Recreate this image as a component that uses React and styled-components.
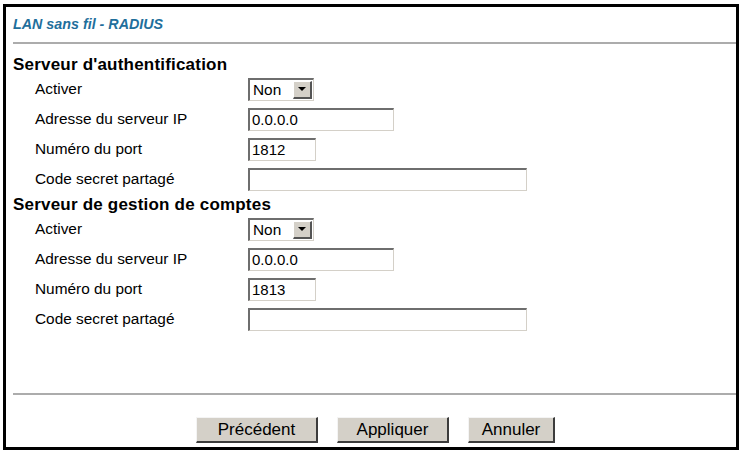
import React from "react";
import styled, { createGlobalStyle } from "styled-components";

const GlobalStyle = createGlobalStyle`
  html, body {
    margin: 0;
    padding: 0;
    background: #ffffff;
  }
  body {
    font-family: "Liberation Sans", Arial, sans-serif;
    color: #000000;
  }
`;

// cadre noir autour de la page
const Frame = styled.div`
  box-sizing: border-box;
  width: 736px;
  height: 446px;
  margin: 4px 0 0 3px;
  border: 3px solid #000000;
  padding: 7px 0 0 7px;
  display: flex;
  flex-direction: column;
`;

const Title = styled.div`
  font-size: 14.3px;
  line-height: 20px;
  font-weight: bold;
  font-style: italic;
  color: #1f6f9c;
`;

const Rule = styled.div`
  height: 2px;
  background: #acacac;
  margin-top: ${(p) => p.$top || 0}px;
`;

const SectionTitle = styled.div`
  font-size: 17px;
  line-height: 18px;
  font-weight: bold;
  letter-spacing: 0.2px;
  margin-top: ${(p) => p.$top || 0}px;
`;

const Row = styled.div`
  display: grid;
  grid-template-columns: 235px 1fr;
  align-items: center;
  height: 30px;
`;

const Label = styled.div`
  padding-left: 22px;
  font-size: 15.4px;
`;

const Field = styled.div`
  box-sizing: border-box;
  width: ${(p) => p.$width}px;
  height: 23px;
  background: #ffffff;
  border-top: 2px solid #6e6e6e;
  border-left: 2px solid #6e6e6e;
  border-bottom: 1px solid #d4d0c8;
  border-right: 1px solid #d4d0c8;
  padding-left: 2px;
  font-size: 15px;
  line-height: 20px;
`;

const Select = styled.div`
  box-sizing: border-box;
  width: 66px;
  height: 23px;
  display: flex;
  align-items: center;
  justify-content: space-between;
  background: #ffffff;
  border-top: 2px solid #6e6e6e;
  border-left: 2px solid #6e6e6e;
  border-bottom: 1px solid #d4d0c8;
  border-right: 1px solid #d4d0c8;
  padding: 0 1px 0 3px;
  font-size: 15.4px;
`;

// bouton de la liste déroulante avec son triangle
const Arrow = styled.span`
  box-sizing: border-box;
  width: 19px;
  height: 18px;
  display: flex;
  align-items: center;
  justify-content: center;
  background: #d4d0c8;
  border-top: 1px solid #ffffff;
  border-left: 1px solid #ffffff;
  border-bottom: 2px solid #555555;
  border-right: 2px solid #555555;

  &::after {
    content: "";
    border-left: 4px solid transparent;
    border-right: 4px solid transparent;
    border-top: 4px solid #000000;
  }
`;

const Footer = styled.div`
  margin-top: auto;
  border-top: 2px solid #acacac;
  padding: 22px 0 4px 2px;
  display: flex;
  justify-content: center;
  gap: 19px;
`;

const Button = styled.button`
  box-sizing: border-box;
  width: ${(p) => p.$width}px;
  height: 26px;
  padding: 0;
  background: #d4d0c8;
  border-top: 1px solid #f4f4f4;
  border-left: 1px solid #f4f4f4;
  border-bottom: 2px solid #3c3c3c;
  border-right: 2px solid #3c3c3c;
  font-family: "Liberation Sans", Arial, sans-serif;
  font-size: 17px;
  color: #000000;
`;

const sections = [
  { title: "Serveur d'authentification", top: 12, port: "1812" },
  { title: "Serveur de gestion de comptes", top: 2, port: "1813" },
];

function ServerSection({ title, top, port }) {
  return (
    <>
      <SectionTitle $top={top}>{title}</SectionTitle>
      <Row>
        <Label>Activer</Label>
        <Select>
          Non
          <Arrow />
        </Select>
      </Row>
      <Row>
        <Label>Adresse du serveur IP</Label>
        <Field $width={146}>0.0.0.0</Field>
      </Row>
      <Row>
        <Label>Numéro du port</Label>
        <Field $width={68}>{port}</Field>
      </Row>
      <Row>
        <Label>Code secret partagé</Label>
        <Field $width={279} />
      </Row>
    </>
  );
}

export default function App() {
  return (
    <>
      <GlobalStyle />
      <Frame>
        <Title>LAN sans fil - RADIUS</Title>
        <Rule $top={8} />
        {sections.map((s) => (
          <ServerSection key={s.title} {...s} />
        ))}
        <Footer>
          <Button $width={122}>Précédent</Button>
          <Button $width={112}>Appliquer</Button>
          <Button $width={87}>Annuler</Button>
        </Footer>
      </Frame>
    </>
  );
}
